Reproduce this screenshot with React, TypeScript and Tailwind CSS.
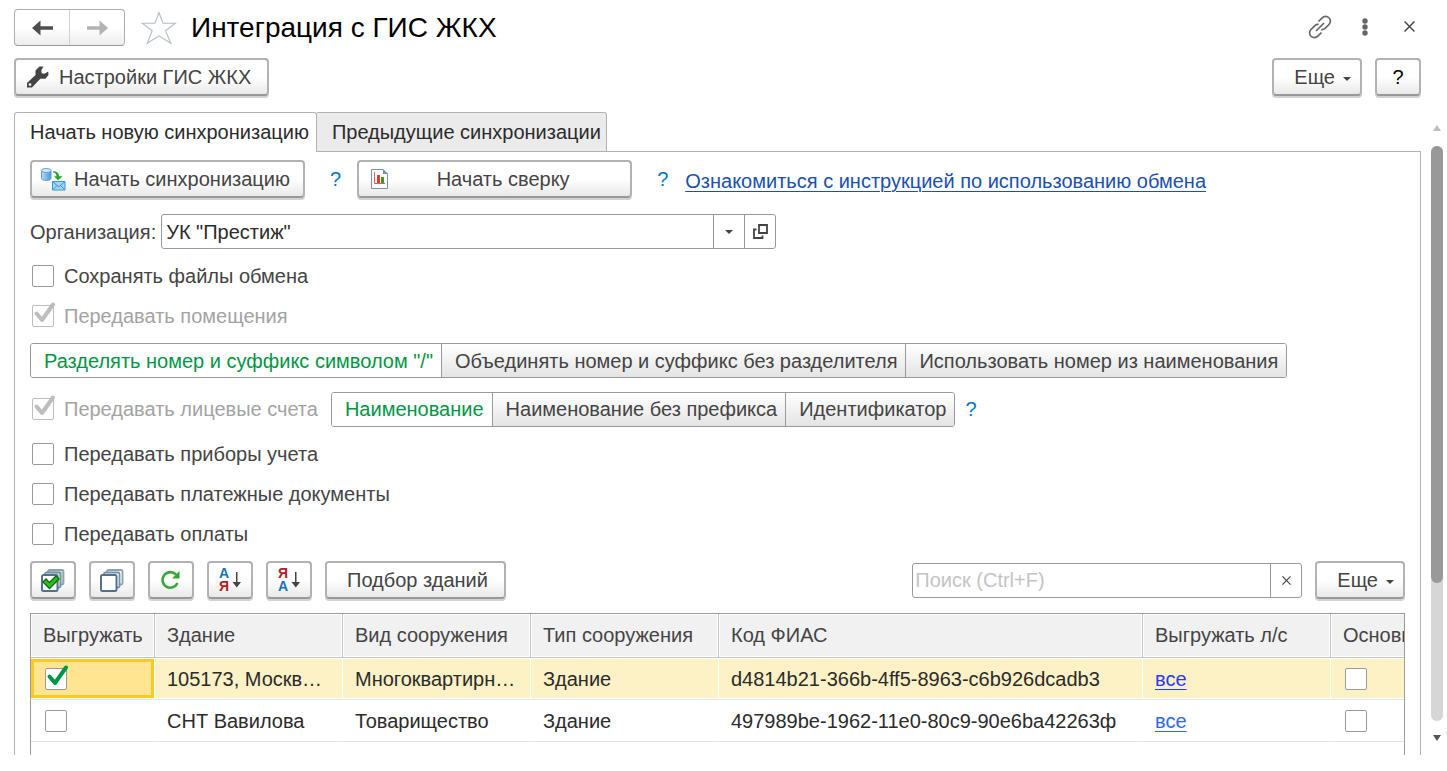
import React, { useState } from "react";
import clsx from "clsx";

const btn =
  "flex h-[38px] items-center rounded border-2 border-[#b2b2b2] border-b-[#999] bg-linear-to-b from-white from-50% to-[#e9e9e9] text-[#444] shadow-[0_2px_0_#d2d2d2]";

const columns = [
  { title: "Выгружать", width: "w-[124px]" },
  { title: "Здание", width: "w-[188px]" },
  { title: "Вид сооружения", width: "w-[188px]" },
  { title: "Тип сооружения", width: "w-[188px]" },
  { title: "Код ФИАС", width: "w-[424px]" },
  { title: "Выгружать л/с", width: "w-[188px]" },
  { title: "Основной", width: "w-[188px]" },
];

const buildings = [
  {
    checked: true,
    name: "105173, Москва г.",
    kind: "Многоквартирный",
    type: "Здание",
    code: "d4814b21-366b-4ff5-8963-c6b926dcadb3",
  },
  {
    checked: false,
    name: "СНТ Вавилова",
    kind: "Товарищество",
    type: "Здание",
    code: "497989be-1962-11e0-80c9-90e6ba42263ф",
  },
];

const CheckMark = ({ className }: { className?: string }) => (
  <svg className={className} width="24" height="24" viewBox="0 0 24 24" fill="none">
    <path d="M4.500 12.500 10 19 21 3.500" stroke="currentColor" strokeWidth="4" strokeLinecap="round" strokeLinejoin="round" />
  </svg>
);

type BoxProps = {
  label: string;
  defaultChecked?: boolean;
  disabled?: boolean;
};

const Box = ({ label, defaultChecked, disabled }: BoxProps) => (
  <span className="relative block h-[22px] w-[22px] shrink-0">
    <input
      type="checkbox"
      aria-label={label}
      defaultChecked={defaultChecked}
      disabled={disabled}
      className="peer block h-[22px] w-[22px] appearance-none rounded-xs border border-[#9a9a9a] bg-white disabled:border-[#bdbdbd]"
    />
    <CheckMark className="pointer-events-none absolute -top-1 left-0 hidden text-[#009646] peer-checked:block peer-disabled:text-[#bdbdbd]" />
  </span>
);

const CheckRow = ({ label, defaultChecked, disabled }: BoxProps) => (
  <label className={clsx("flex h-10 items-center gap-2.5 pl-0.5", disabled ? "text-[#a3a3a3]" : "text-[#444]")}>
    <Box label={label} defaultChecked={defaultChecked} disabled={disabled} />
    {label}
  </label>
);

const Segmented = ({ name, options }: { name: string; options: string[] }) => {
  const [value, setValue] = useState(options[0]);
  return (
    <div role="radiogroup" aria-label={name} className="flex h-[35px] overflow-hidden rounded-[3px] border border-[#999]">
      {options.map((option, i) => (
        <label
          key={option}
          className={clsx(
            "flex items-center pr-2 pl-[13px] whitespace-nowrap",
            i > 0 && "border-l border-[#999]",
            value === option ? "bg-white text-[#009646]" : "bg-linear-to-b from-white to-[#e4e4e4] text-[#444]"
          )}
        >
          <input
            type="radio"
            name={name}
            className="absolute appearance-none"
            checked={value === option}
            onChange={() => setValue(option)}
          />
          {option}
        </label>
      ))}
    </div>
  );
};

const Caret = () => (
  <svg width="8" height="4" viewBox="0 0 8 4" fill="#444">
    <path d="M0 0h8L4 4z" />
  </svg>
);

const Help = () => (
  <button type="button" className="text-[#0078c8]" aria-label="Справка">
    ?
  </button>
);

const More = () => (
  <button type="button" className={clsx(btn, "gap-2 pr-[9px] pl-5")}>
    Еще
    <span className="pt-1">
      <Caret />
    </span>
  </button>
);

const WrenchIcon = () => (
  <svg width="22" height="22" viewBox="0 0 22 22" fill="#444">
    <path
      fillRule="evenodd"
      d="M12.500.5h4l-2.300 4 .5 2.800 2.800.5 3.700-2.300.3 3.500-3 3.700H13.300L5 21.500H0V17l8.500-8V4.500zM3 17.200a1.400 1.400 0 1 0 0 2.800 1.400 1.400 0 0 0 0-2.800z"
    />
  </svg>
);

const SyncIcon = () => (
  <svg width="25" height="23" viewBox="0 0 25 23">
    <defs>
      <linearGradient id="db" x1="0" x2="1">
        <stop offset="0" stopColor="#b9dcf5" />
        <stop offset="1" stopColor="#4d94d0" />
      </linearGradient>
    </defs>
    <path d="M.5 2.500v8c0 2.500 9.500 2.500 9.500 0v-8" fill="url(#db)" stroke="#5a9fd4" />
    <ellipse cx="5.250" cy="2.500" rx="4.750" ry="2" fill="#d7ecfa" stroke="#5a9fd4" />
    <path d="M12 3.200c4 0 6 2 6 5h3.500l-4.500 4-4-4h2.500c0-2.500-1.300-3.500-3.500-4z" fill="#1fa81f" />
    <path d="M11.500 13.500h12.500v8.500H11.500z" fill="#9fd8f6" stroke="#3d93cf" />
    <path d="m11.500 13.500 6.300 5.500 6.200-5.500M11.500 22l4.500-4.500M24 22l-4.500-4.500" fill="none" stroke="#3d93cf" />
  </svg>
);

const ReportIcon = () => (
  <svg width="17" height="20" viewBox="0 0 17 20" fill="none">
    <path d="M.5.5H12l4.500 4.500v14.500H.5z" fill="#fff" stroke="#7e8f9f" />
    <path d="M12 0v5h5z" fill="#7e8f9f" />
    <path d="M3.500 3v11.500H14" stroke="#c0686a" />
    <path d="M6 6h3v8H6z" fill="#e8382a" />
    <path d="M10 8h3v6h-3z" fill="#3d9a1e" />
  </svg>
);

const StackIcon = ({ marked }: { marked?: boolean }) => (
  <svg width="24" height="23" viewBox="0 0 24 23" fill="#fff">
    <rect x="7" y="1" width="15.500" height="14.500" rx="1.500" fill={marked ? "#c5dfc4" : "#fff"} stroke="#8ba0b1" strokeWidth="1.800" />
    <rect x="4" y="3.500" width="15.500" height="15" rx="1.500" fill={marked ? "#d6e8d5" : "#fff"} stroke="#7890a5" strokeWidth="1.800" />
    <rect x="1" y="6" width="15.500" height="16" rx="1.500" stroke="#557089" strokeWidth="2" />
    {marked && <path d="m2 13 3-3 3.500 3.500 6.500-6.500 3 3-9.500 9.500z" fill="#2bc416" stroke="#0a6b12" strokeWidth="1.300" />}
  </svg>
);

const RefreshIcon = () => (
  <svg width="20" height="20" viewBox="0 0 20 20">
    <path d="M16.500 13A7.800 7.800 0 1 1 15 4.500" fill="none" stroke="#3aa63a" strokeWidth="2.600" />
    <path d="M18.500 1v7.500H11z" fill="#2fa82f" />
  </svg>
);

const SortIcon = ({ desc }: { desc?: boolean }) => (
  <svg width="22" height="24" viewBox="0 0 22 24">
    <g fontFamily="Liberation Sans, sans-serif" fontWeight="700" fontSize="14">
      <text x="0" y="10" fill={desc ? "#b22222" : "#1673b8"}>
        {desc ? "Я" : "А"}
      </text>
      <text x="0" y="23" fill={desc ? "#1673b8" : "#b22222"}>
        {desc ? "А" : "Я"}
      </text>
    </g>
    <path d="M17 4h1.500v10H22l-4.200 5.500-4.300-5.500H17z" fill="#444" />
  </svg>
);

const CrossIcon = ({ size }: { size: number }) => (
  <svg width={size} height={size} viewBox="0 0 10 10" stroke="#444" strokeWidth="1.300">
    <path d="m.5.5 9 9M9.500.5l-9 9" />
  </svg>
);

const TitleBar = () => (
  <header className="flex h-[37px] items-center pr-1.5">
    <div className="flex h-[37px] w-[111px] rounded border border-[#adadad] border-b-[#999] bg-linear-to-b from-white from-50% to-[#ededed]">
      <button type="button" aria-label="Назад" className="flex flex-1 items-center justify-center border-r border-[#d2d2d2]">
        <svg width="21" height="16" viewBox="0 0 21 16" fill="#4d4d4d">
          <path d="M0 8 8.500.5v5.700H21v3.600H8.500v5.700z" />
        </svg>
      </button>
      <button type="button" aria-label="Вперед" className="flex flex-1 items-center justify-center">
        <svg width="21" height="16" viewBox="0 0 21 16" fill="#b2b2b2">
          <path d="M21 8 12.500.5v5.700H0v3.600h12.500v5.700z" />
        </svg>
      </button>
    </div>
    <button type="button" aria-label="Избранное" className="ml-4">
      <svg width="36" height="34" viewBox="0 0 36 34" fill="none" stroke="#b4bcc4" strokeWidth="1.100">
        <path d="m18 1.500 4 10.700h12.500l-10 7.600 5.300 12.500-11.800-7.400-11.800 7.400 5-12.500L1.200 12.200H14z" />
      </svg>
    </button>
    <h1 className="ml-3.5 flex-1 text-[28px] text-black">Интеграция с ГИС ЖКХ</h1>
    <div className="flex items-center pb-0.5">
      <button type="button" aria-label="Получить ссылку">
        <svg width="24" height="24" viewBox="0 0 24 24" fill="none" stroke="#666" strokeWidth="1.700">
          <path d="M10.500 6.500 14.200 2.800a4.700 4.700 0 0 1 6.800 6.700l-4.200 4.200q-1.600 1.300-3.500.8" />
          <path d="M13.500 17.500 9.800 21.200A4.700 4.700 0 0 1 3 14.500l4.200-4.200q1.600-1.300 3.500-.8M8 16l8-8" />
        </svg>
      </button>
      <button type="button" aria-label="Меню" className="ml-[30px]">
        <svg width="6" height="18" viewBox="0 0 6 18" fill="#666">
          <circle cx="3" cy="3" r="2.700" />
          <circle cx="3" cy="9" r="2.700" />
          <circle cx="3" cy="15" r="2.700" />
        </svg>
      </button>
      <button type="button" aria-label="Закрыть" className="ml-9">
        <CrossIcon size={11} />
      </button>
    </div>
  </header>
);

const BuildingsTable = () => (
  <div className="flex-1 overflow-hidden border border-b-0 border-[#9a9a9a]">
    <table className="w-[1488px] table-fixed border-separate border-spacing-0">
      <thead>
        <tr className="h-11 text-left text-[#444]">
          {columns.map((col) => (
            <th
              key={col.title}
              className={clsx(
                col.width,
                "border-r border-b border-[#c4c4c4] bg-[#f1f1f1] px-3 pb-0.5 font-normal whitespace-nowrap shadow-[inset_0_0_0_1px_#fff]"
              )}
            >
              {col.title}
            </th>
          ))}
        </tr>
      </thead>
      <tbody>
        {buildings.map((b) => {
          const cell = clsx(
            "truncate border-r border-b border-r-white border-b-[#e2e2e2] px-3",
            b.checked && "bg-[#fdf1c6] shadow-[inset_0_1px_#fff,inset_0_-1px_#fff]"
          );
          return (
            <tr key={b.name} className="h-[42px] text-[#2b2b2b]">
              <td className="border-r border-b border-r-white border-b-[#e2e2e2] p-0">
                <div className={clsx("flex h-[39px] items-center border-3 pl-[11px]", b.checked ? "border-[#fac926] bg-[#ffe491]" : "border-white")}>
                  <Box label={"Выгружать " + b.name} defaultChecked={b.checked} />
                </div>
              </td>
              <td className={clsx(cell, "pr-4")}>{b.name}</td>
              <td className={cell}>{b.kind}</td>
              <td className={cell}>{b.type}</td>
              <td className={cell}>{b.code}</td>
              <td className={cell}>
                <a href="#" className={clsx("underline decoration-1 underline-offset-3", b.checked ? "text-[#2b3bf5] decoration-[#2b3bf5]" : "text-[#2f66f5] decoration-[#2f66f5]")}>
                  все
                </a>
              </td>
              <td className={cell}>
                <div className="pl-0.5">
                  <Box label={"Основной " + b.name} />
                </div>
              </td>
            </tr>
          );
        })}
      </tbody>
    </table>
  </div>
);

const SyncPanel = () => (
  <div role="tabpanel" className="flex min-w-0 flex-1 flex-col border-x border-[#b2b2b2] px-[15px] pt-2">
    <div className="flex items-center">
      <button type="button" className={clsx(btn, "w-[275px] gap-2 px-[9px]")}>
        <SyncIcon />
        Начать синхронизацию
      </button>
      <div className="ml-[25px]">
        <Help />
      </div>
      <button type="button" className={clsx(btn, "ml-4 w-[275px] px-3")}>
        <ReportIcon />
        <span className="flex-1">Начать сверку</span>
      </button>
      <div className="mr-[17px] ml-[25px]">
        <Help />
      </div>
      <a href="#" className="pt-1 text-[#1a50b0] underline decoration-[#1a50b0] decoration-1 underline-offset-3">
        Ознакомиться с инструкцией по использованию обмена
      </a>
    </div>

    <div className="mt-4 flex items-center gap-[5px]">
      <label htmlFor="org" className="text-[#444]">
        Организация:
      </label>
      <div className="flex h-[35px] w-[615px] rounded-[3px] border border-[#999]">
        <input id="org" defaultValue={'УК "Престиж"'} className="min-w-0 flex-1 px-1 text-[#2b2b2b] outline-none" />
        <button type="button" aria-label="Выбрать" className="flex w-[31px] items-center justify-center border-l border-[#999]">
          <Caret />
        </button>
        <button type="button" aria-label="Открыть" className="flex w-[31px] items-center justify-center border-l border-[#999]">
          <svg width="15" height="15" viewBox="0 0 15 15" fill="none" stroke="#444" strokeWidth="1.800">
            <path d="M6 1h8v8H6zM3.500 5.500H1V14h8.500v-2.500" />
          </svg>
        </button>
      </div>
    </div>

    <div className="mt-[7px]">
      <CheckRow label="Сохранять файлы обмена" />
      <CheckRow label="Передавать помещения" defaultChecked disabled />
    </div>
    <div className="mt-[7px] flex">
      <Segmented
        name="Номер помещения"
        options={['Разделять номер и суффикс символом "/"', "Объединять номер и суффикс без разделителя", "Использовать номер из наименования"]}
      />
    </div>
    <div className="mt-[11px] flex items-center">
      <CheckRow label="Передавать лицевые счета" defaultChecked disabled />
      <div className="mr-2.5 ml-[13px]">
        <Segmented name="Номер лицевого счета" options={["Наименование", "Наименование без префикса", "Идентификатор"]} />
      </div>
      <Help />
    </div>
    <div className="mt-[5px]">
      <CheckRow label="Передавать приборы учета" />
      <CheckRow label="Передавать платежные документы" />
      <CheckRow label="Передавать оплаты" />
    </div>

    <div className="mt-[7px] mb-3.5 flex items-center gap-[13px]">
      <button type="button" aria-label="Установить флажки" className={clsx(btn, "w-[46px] justify-center")}>
        <StackIcon marked />
      </button>
      <button type="button" aria-label="Снять флажки" className={clsx(btn, "w-[46px] justify-center")}>
        <StackIcon />
      </button>
      <button type="button" aria-label="Обновить" className={clsx(btn, "w-[46px] justify-center")}>
        <RefreshIcon />
      </button>
      <button type="button" aria-label="По возрастанию" className={clsx(btn, "w-[46px] justify-center")}>
        <SortIcon />
      </button>
      <button type="button" aria-label="По убыванию" className={clsx(btn, "w-[46px] justify-center")}>
        <SortIcon desc />
      </button>
      <button type="button" className={clsx(btn, "pr-4 pl-5")}>
        Подбор зданий
      </button>
      <div className="ml-auto flex h-[35px] w-[390px] rounded-[3px] border border-[#999]">
        <input aria-label="Поиск" placeholder="Поиск (Ctrl+F)" className="min-w-0 flex-1 px-0.5 outline-none placeholder:text-[#c4c4c4]" />
        <button type="button" aria-label="Очистить" className="flex w-[31px] items-center justify-center border-l border-[#999]">
          <CrossIcon size={9} />
        </button>
      </div>
      <More />
    </div>

    <BuildingsTable />
  </div>
);

const ScrollBar = () => (
  <div className="flex w-3 flex-col items-center pt-[13px] pb-3.5">
    <svg width="8" height="6" viewBox="0 0 8 6" fill="#bdbdbd">
      <path d="M4 0 8 6H0z" />
    </svg>
    <div className="mt-[15px] mb-3.5 w-3 flex-1 rounded-full bg-[#d6d6d6]">
      <div className="h-[76%] rounded-full bg-[#999]" />
    </div>
    <svg width="8" height="6" viewBox="0 0 8 6" fill="#555">
      <path d="M4 6 0 0h8z" />
    </svg>
  </div>
);

const App = () => {
  return (
    <div className="flex min-h-screen flex-col overflow-hidden bg-white pt-[9px] pr-1 pb-4 pl-3.5 font-['Liberation_Sans',Arial,sans-serif] text-[20px] leading-6">
      <div className="pr-[22px]">
        <TitleBar />
        <div className="mt-3 flex items-center">
          <button type="button" className={clsx(btn, "gap-2.5 pr-4 pl-[11px]")}>
            <WrenchIcon />
            Настройки ГИС ЖКХ
          </button>
          <div className="ml-auto">
            <More />
          </div>
          <button type="button" className={clsx(btn, "ml-[13px] w-[46px] justify-center text-black")}>
            ?
          </button>
        </div>
      </div>

      <div className="mt-4 flex flex-1 gap-2.5">
        <div className="flex min-w-0 flex-1 flex-col">
          <div role="tablist" className="flex h-10">
            <button type="button" role="tab" aria-selected="true" className="rounded-t-[3px] border border-b-0 border-[#b2b2b2] pr-[7px] pb-px pl-[15px] text-[#2b2b2b]">
              Начать новую синхронизацию
            </button>
            <button type="button" role="tab" aria-selected="false" className="rounded-tr-[3px] border border-l-0 border-[#b2b2b2] bg-[#ebebeb] pr-[5px] pl-[15px] text-[#2b2b2b]">
              Предыдущие синхронизации
            </button>
            <div className="flex-1 border-b border-[#b2b2b2]" />
          </div>
          <SyncPanel />
        </div>
        <ScrollBar />
      </div>
    </div>
  );
};

export default App;
